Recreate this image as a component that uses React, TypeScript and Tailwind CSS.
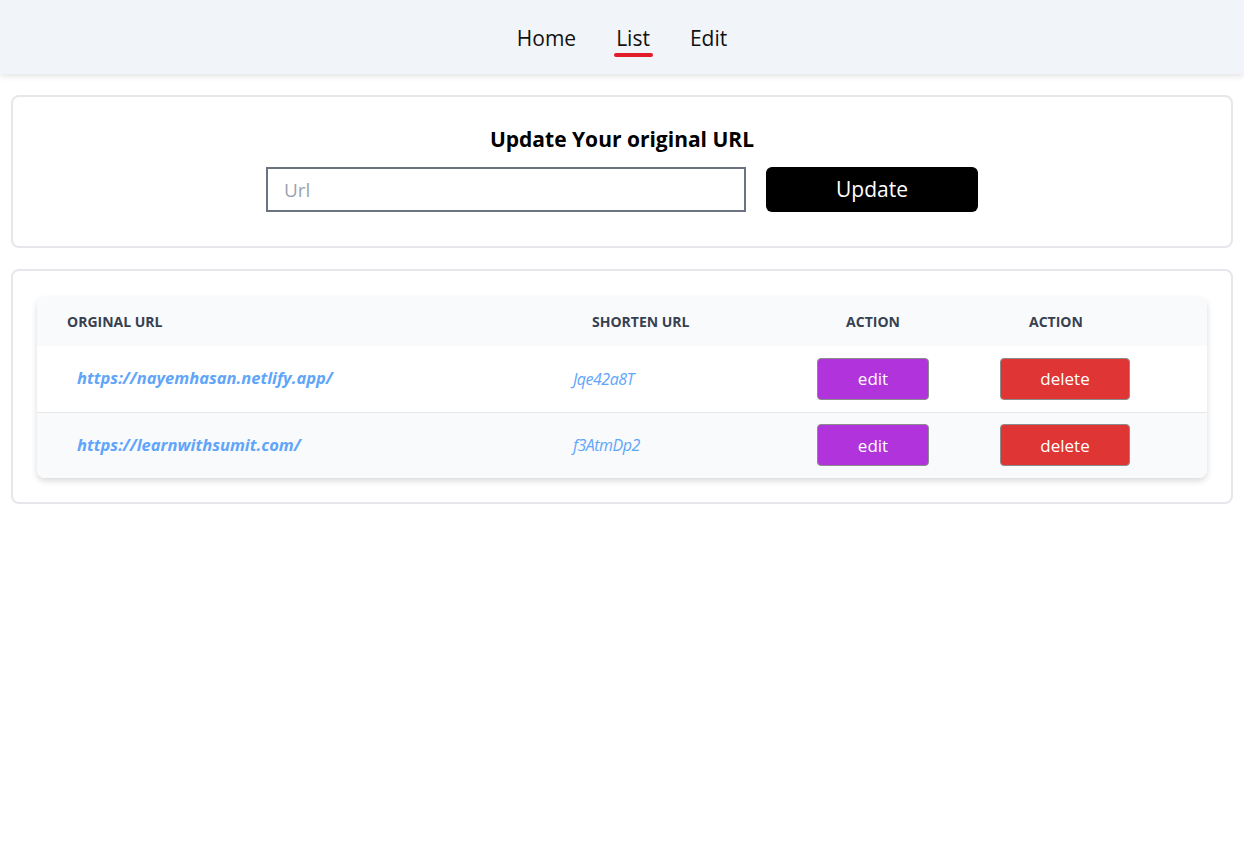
const rows = [
  { original: "https://nayemhasan.netlify.app/", short: "Jqe42a8T", bg: "bg-white" },
  { original: "https://learnwithsumit.com/", short: "f3AtmDp2", bg: "bg-[#f9fafb]" },
];

export default function App() {
  return (
    <div className="min-h-screen bg-white font-['Open_Sans',sans-serif] text-black">
      {/* Navbar */}
      <nav className="h-[74px] pt-[3px] bg-[#f1f5f9] shadow-[0_2px_6px_rgba(0,0,0,0.12)] flex items-center justify-center gap-10">
        <a className="text-[21px] text-[#111]">Home</a>
        <a className="relative text-[21px] text-[#111]">
          List
          <span className="absolute left-[-2px] right-[-3px] bottom-[-3px] h-[4px] rounded-full bg-[#e11d2a]" />
        </a>
        <a className="text-[21px] text-[#111]">Edit</a>
      </nav>

      {/* Update form */}
      <div className="mx-[11px] mt-[21px] border-2 border-[#e5e7eb] rounded-lg pt-[27px] pb-[34px] flex flex-col items-center">
        <h2 className="text-[21px] font-bold leading-[30px]">Update Your original URL</h2>
        <div className="mt-[13px] flex gap-5">
          <input
            placeholder="Url"
            className="w-[480px] h-[45px] border-2 border-[#6b7280] px-4 text-[19px] placeholder:text-[#9ca3af] outline-none"
          />
          <button className="w-[212px] h-[45px] bg-black text-white rounded-md text-[21px]">Update</button>
        </div>
      </div>

      {/* List */}
      <div className="mx-[11px] mt-[21px] border-2 border-[#e5e7eb] rounded-lg px-[24px] pt-[26px] pb-[24px]">
        <div className="rounded-lg overflow-hidden shadow-[0_3px_6px_rgba(0,0,0,0.15)]">
          <table className="w-full border-collapse">
            <thead>
              <tr className="bg-[#f9fafb] h-[49px] text-[14px] font-bold text-[#374151] uppercase">
                <th className="w-[516px] text-left pl-[30px]">Orginal URL</th>
                <th className="w-[224px] text-left pl-[39px]">Shorten URL</th>
                <th className="w-[192px] text-center">Action</th>
                <th className="text-left pl-[60px]">Action</th>
              </tr>
            </thead>
            <tbody>
              {rows.map((r, i) => (
                <tr key={i} className={`${r.bg} h-[66px] ${i === 0 ? "border-b border-[#e5e7eb]" : ""}`}>
                  <td className="pl-[40px] text-[16.5px] font-bold italic text-[#60a5fa]">{r.original}</td>
                  <td className="pl-[20px] text-[16px] tracking-[-0.5px] italic text-[#60a5fa]">{r.short}</td>
                  <td className="text-center">
                    <button className="w-[112px] h-[42px] bg-[#b133db] border border-[#8b8b8b] rounded text-white text-[17px]">
                      edit
                    </button>
                  </td>
                  <td className="pl-[31px]">
                    <button className="w-[130px] h-[42px] bg-[#e03535] border border-[#8b8b8b] rounded text-white text-[17px]">
                      delete
                    </button>
                  </td>
                </tr>
              ))}
            </tbody>
          </table>
        </div>
      </div>
    </div>
  );
}
